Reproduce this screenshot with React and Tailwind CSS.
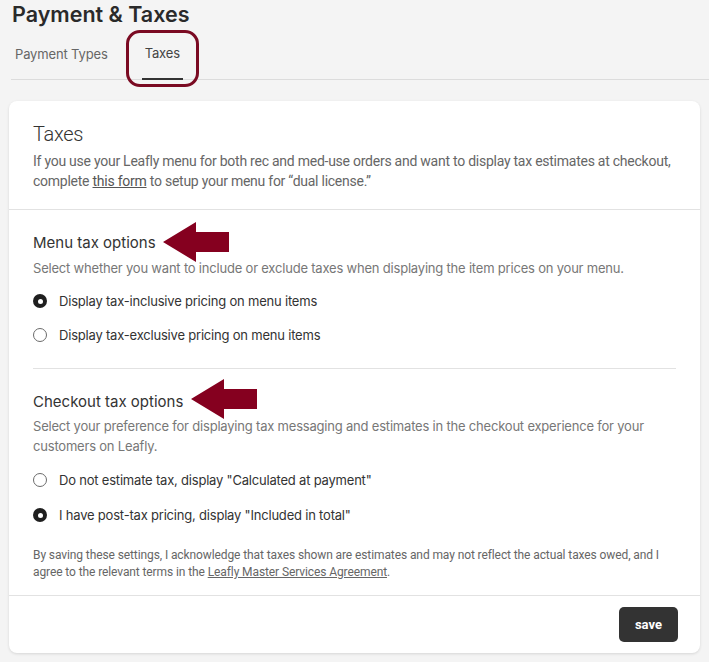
import React, { useState } from 'react';

const Radio = ({ checked, label, onClick }) => (
  <label className="flex items-center gap-[12px] cursor-pointer" onClick={onClick}>
    {checked ? (
      <span className="w-[14px] h-[14px] rounded-full bg-[#1f1f1f] flex items-center justify-center shrink-0">
        <span className="w-[5px] h-[5px] rounded-full bg-white" />
      </span>
    ) : (
      <span className="w-[14px] h-[14px] rounded-full border border-[#6b6b6b] bg-white shrink-0" />
    )}
    <span className="text-[13px] leading-[20px] tracking-[-0.2px] text-[#333]">{label}</span>
  </label>
);

const Arrow = ({ className }) => (
  <svg className={className} width="67" height="41" viewBox="0 0 67 41">
    <polygon points="0,20 33,0 33,10 66,10 66,30 33,30 33,40" fill="#85001f" />
  </svg>
);

export default function App() {
  const [menuTax, setMenuTax] = useState('inclusive');
  const [checkoutTax, setCheckoutTax] = useState('post');

  return (
    <div className="min-h-[662px] bg-[#f4f4f4] font-['Inter',sans-serif] text-[#222] relative">
      <div className="pl-[12px]">
        <h1 className="text-[21.5px] leading-[28px] font-semibold text-[#2a2a2a]">Payment &amp; Taxes</h1>
      </div>
      <div className="ml-[11px] mt-[15px] border-b border-[#dcdcdc] flex items-end gap-[34px] pl-[4px] relative">
        <button className="pb-[15px] text-[13px] leading-[20px] tracking-[-0.15px] text-[#666]">Payment Types</button>
        <button className="pb-[15px] text-[13px] leading-[20px] tracking-[-0.15px] text-[#444] border-b-2 border-[#333] -mb-[1px] px-[3px]">Taxes</button>
        <div className="absolute left-[115px] -top-[13px] w-[73px] h-[57px] rounded-[14px] border-[3px] border-[#7a0a22]" />
      </div>

      <div className="mx-[9px] mt-[21px] bg-white rounded-[8px] shadow-[0_1px_3px_rgba(0,0,0,0.12)] relative">
        <div className="px-[24px] pt-[21px] pb-[18px] border-b border-[#e2e2e2]">
          <h2 className="text-[20px] leading-[24px] font-['Roboto',sans-serif] font-light text-[#333] tracking-[-0.3px]">Taxes</h2>
          <p className="mt-[5px] text-[14px] leading-[20px] font-['Roboto',sans-serif] text-[#666] tracking-[-0.25px]">
            If you use your Leafly menu for both rec and med-use orders and want to display tax estimates at checkout,
            complete <a className="underline text-[#555]">this form</a> to setup your menu for “dual license.”
          </p>
        </div>

        <div className="px-[24px]">
          <div className="pt-[23px] pb-[23px] border-b border-[#e2e2e2] relative">
            <h3 className="text-[15px] leading-[20px] text-[#333]">Menu tax options</h3>
            <p className="mt-[5px] text-[13px] leading-[20px] tracking-[-0.2px] text-[#777]">
              Select whether you want to include or exclude taxes when displaying the item prices on your menu.
            </p>
            <div className="mt-[13px] flex flex-col gap-[14px]">
              <Radio checked={menuTax === 'inclusive'} onClick={() => setMenuTax('inclusive')} label="Display tax-inclusive pricing on menu items" />
              <Radio checked={menuTax === 'exclusive'} onClick={() => setMenuTax('exclusive')} label="Display tax-exclusive pricing on menu items" />
            </div>
            <Arrow className="absolute left-[130px] top-[12px]" />
          </div>

          <div className="pt-[23px] pb-[14px] relative">
            <h3 className="text-[15px] leading-[20px] text-[#333]">Checkout tax options</h3>
            <p className="mt-[4px] text-[13px] leading-[20px] tracking-[-0.2px] text-[#777]">
              Select your preference for displaying tax messaging and estimates in the checkout experience for your customers on Leafly.
            </p>
            <div className="mt-[14px] flex flex-col gap-[15px]">
              <Radio checked={checkoutTax === 'none'} onClick={() => setCheckoutTax('none')} label={'Do not estimate tax, display "Calculated at payment"'} />
              <Radio checked={checkoutTax === 'post'} onClick={() => setCheckoutTax('post')} label={'I have post-tax pricing, display "Included in total"'} />
            </div>
            <p className="mt-[22px] text-[12px] leading-[17px] font-['Roboto',sans-serif] text-[#666] tracking-[-0.1px]">
              By saving these settings, I acknowledge that taxes shown are estimates and may not reflect the actual taxes owed, and I
              agree to the relevant terms in the <a className="underline">Leafly Master Services Agreement</a>.
            </p>
            <Arrow className="absolute left-[158px] top-[10px]" />
          </div>
        </div>

        <div className="border-t border-[#e2e2e2] px-[22px] py-[11px] flex justify-end">
          <button className="h-[35px] px-[16px] rounded-[5px] bg-[#333] text-white text-[13px] font-bold font-['Roboto',sans-serif]">save</button>
        </div>
      </div>
    </div>
  );
}
